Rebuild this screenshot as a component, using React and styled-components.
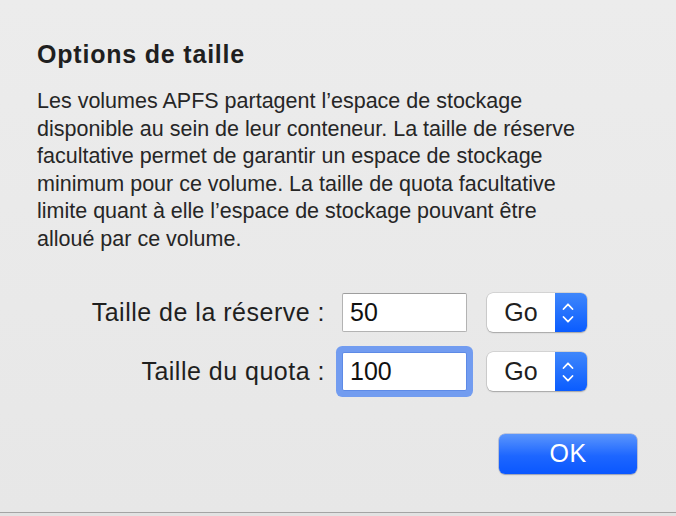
import styled, { createGlobalStyle } from 'styled-components';

const GlobalStyle = createGlobalStyle`
  html, body {
    margin: 0;
    padding: 0;
    background: #e2e2e2;
  }

  body {
    font-family: "Liberation Sans", Arial, sans-serif;
    -webkit-font-smoothing: antialiased;
  }
`;

const ChevronIcon = () => (
  <svg width='12' height='24' viewBox='0 0 12 24' fill='none'>
    <path d='M1.5 8 L6 3.3 L10.5 8' stroke='#fff' strokeWidth='1.8' strokeLinecap='round' strokeLinejoin='round' />
    <path d='M1.5 16 L6 20.7 L10.5 16' stroke='#fff' strokeWidth='1.8' strokeLinecap='round' strokeLinejoin='round' />
  </svg>
);

const SizeRow = ({ label, value, focused }) => (
  <SRow>
    <SLabel>{label}</SLabel>
    <SInput defaultValue={value} $focused={focused} />
    <SPopup>
      <SPopupValue>Go</SPopupValue>
      <SPopupArrows>
        <ChevronIcon />
      </SPopupArrows>
    </SPopup>
  </SRow>
);

const App = () => {
  return (
    <>
      <GlobalStyle />
      <SWindow>
        <STitle>Options de taille</STitle>
        <SDescription>
          Les volumes APFS partagent l’espace de stockage
          <br />
          disponible au sein de leur conteneur. La taille de réserve
          <br />
          facultative permet de garantir un espace de stockage
          <br />
          minimum pour ce volume. La taille de quota facultative
          <br />
          limite quant à elle l’espace de stockage pouvant être
          <br />
          alloué par ce volume.
        </SDescription>

        <SForm>
          <SizeRow label='Taille de la réserve :' value='50' />
          <SizeRow label='Taille du quota :' value='100' focused />
        </SForm>

        <SFooter>
          <SButton>OK</SButton>
        </SFooter>
      </SWindow>
    </>
  );
};

const SWindow = styled.div`
  display: flex;
  flex-direction: column;

  width: 676px;
  height: 513px;
  padding: 39px 39px 0 37px;
  box-sizing: border-box;

  background: linear-gradient(#ececec, #e7e7e7);
  border-bottom: 1px solid #a4a4a4;
`;

const STitle = styled.h1`
  margin: 0;

  color: #1f1f1f;
  font-size: 25px;
  font-weight: 700;
  line-height: 30px;
  letter-spacing: 0.8px;
`;

const SDescription = styled.p`
  margin: 19px 0 0;

  color: #262626;
  font-size: 21.5px;
  line-height: 27.6px;
  white-space: nowrap;
`;

const SForm = styled.div`
  display: flex;
  flex-direction: column;
  gap: 19px;

  margin-top: 39px;
`;

const SRow = styled.div`
  display: flex;
  align-items: center;

  height: 40px;
`;

const SLabel = styled.span`
  width: 288px;
  margin-right: 17px;

  color: #1f1f1f;
  font-size: 25px;
  letter-spacing: 0.5px;
  text-align: right;
  white-space: nowrap;
`;

const SInput = styled.input`
  width: 125px;
  height: 39px;
  padding: 0 7px;
  box-sizing: border-box;

  color: #111;
  font-family: inherit;
  font-size: 25px;

  background: #fff;
  border: 1px solid ${({ $focused }) => ($focused ? '#5d8ae6' : '#b3b3b3')};
  border-top-color: ${({ $focused }) => ($focused ? '#5d8ae6' : '#9e9e9e')};
  border-radius: 2px;
  outline: none;
  box-shadow: ${({ $focused }) => ($focused ? '0 0 0 6px #729cf0' : 'none')};
`;

const SPopup = styled.div`
  display: flex;

  width: 100px;
  height: 39px;
  margin-left: 20px;

  background: #fff;
  border-radius: 6px;
  box-shadow: 0 0 0 0.5px rgba(0, 0, 0, 0.18), 0 1px 1.5px rgba(0, 0, 0, 0.22);
  overflow: hidden;
`;

const SPopupValue = styled.span`
  display: flex;
  align-items: center;
  justify-content: center;
  flex: 1;

  color: #1f1f1f;
  font-size: 25px;
`;

const SPopupArrows = styled.span`
  display: flex;
  align-items: center;
  justify-content: center;

  width: 32px;
  padding-right: 6px;
  box-sizing: border-box;

  background: linear-gradient(#3f87fb, #0a5cff);
`;

const SFooter = styled.div`
  display: flex;
  justify-content: flex-end;

  margin-top: 42px;
`;

const SButton = styled.button`
  width: 138px;
  height: 40px;
  padding: 0;

  color: #fff;
  font-family: inherit;
  font-size: 25px;
  letter-spacing: 0.5px;

  background: linear-gradient(#5b96fc, #1d66ff 55%, #0a57ff);
  border: none;
  border-radius: 6px;
  box-shadow: 0 0 0 0.5px rgba(0, 40, 160, 0.35), 0 1px 1.5px rgba(0, 0, 0, 0.2);

  cursor: pointer;
`;

export default App;
